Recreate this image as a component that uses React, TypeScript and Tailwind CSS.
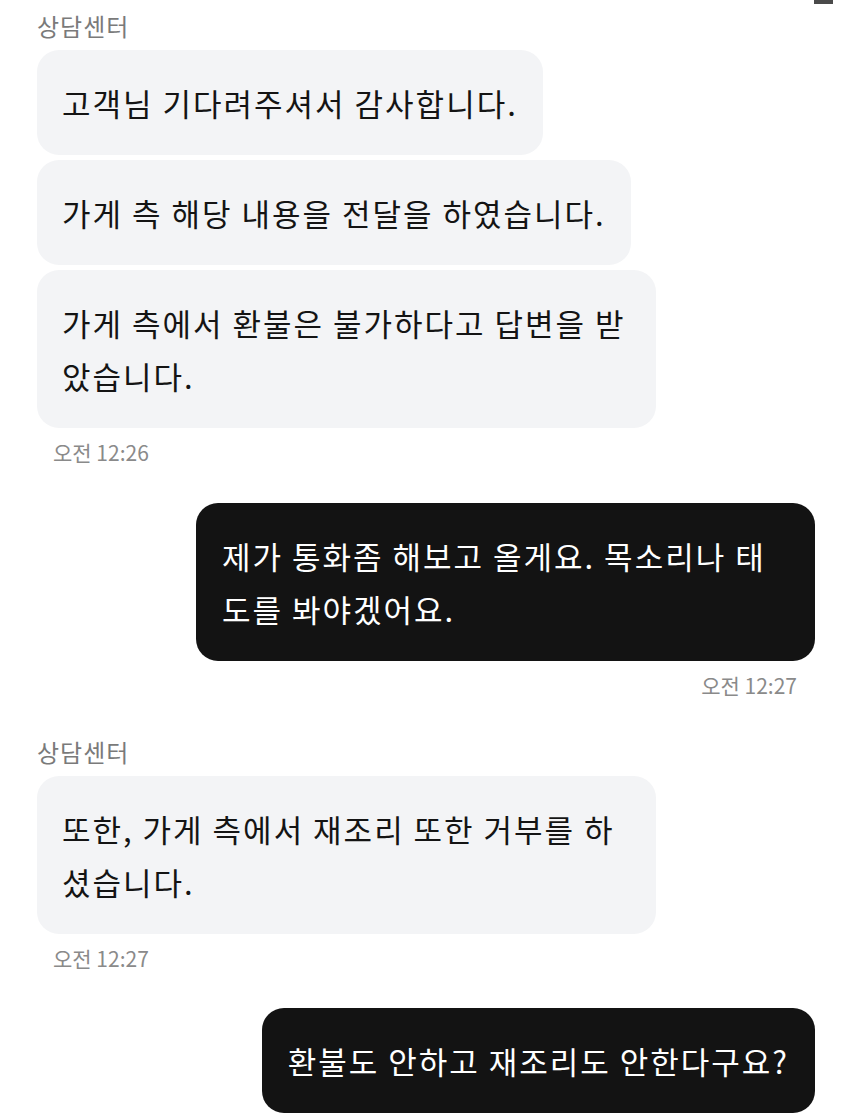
import React from "react";

const font = { fontFamily: '"Noto Sans CJK KR", "Noto Sans", sans-serif' };

function Label({ children }: { children: React.ReactNode }) {
  return <div className="text-[24px] leading-[30px] tracking-[1px] text-[#7a7a7a]">{children}</div>;
}

function LeftBubble({ children }: { children: React.ReactNode }) {
  return (
    <div className="self-start max-w-[619px] rounded-[22px] bg-[#f3f4f6] px-[25px] py-[26px] text-[31px] leading-[53px] tracking-[2px] text-[#141414]">
      {children}
    </div>
  );
}

function RightBubble({ children }: { children: React.ReactNode }) {
  return (
    <div className="self-end max-w-[619px] rounded-[22px] bg-[#131313] px-[26px] py-[26px] text-[31px] leading-[53px] tracking-[2px] text-white">
      {children}
    </div>
  );
}

function Time({ right, children }: { right?: boolean; children: React.ReactNode }) {
  return (
    <div
      className={
        "mt-[12px] text-[21px] leading-[24px] text-[#8a8a8a] " +
        (right ? "self-end pr-[18px]" : "self-start pl-[16px]")
      }
    >
      {children}
    </div>
  );
}

export default function App() {
  return (
    <div className="relative h-[1117px] w-[850px] overflow-hidden bg-white" style={font}>
      <div className="absolute right-[17px] top-0 h-[4px] w-[19px] bg-[#4a4a4a]" />
      <div className="flex flex-col pl-[37px] pr-[35px] pt-[11px]">
        <Label>상담센터</Label>
        <div className="mt-[9px] flex flex-col gap-[5px]">
          <LeftBubble>고객님 기다려주셔서 감사합니다.</LeftBubble>
          <LeftBubble>가게 측 해당 내용을 전달을 하였습니다.</LeftBubble>
          <LeftBubble>가게 측에서 환불은 불가하다고 답변을 받았습니다.</LeftBubble>
        </div>
        <Time>오전 12:26</Time>

        <div className="mt-[39px] flex flex-col">
          <RightBubble>제가 통화좀 해보고 올게요. 목소리나 태도를 봐야겠어요.</RightBubble>
          <Time right>오전 12:27</Time>
        </div>

        <div className="mt-[40px]">
          <Label>상담센터</Label>
        </div>
        <div className="mt-[9px] flex flex-col">
          <LeftBubble>또한, 가게 측에서 재조리 또한 거부를 하셨습니다.</LeftBubble>
          <Time>오전 12:27</Time>
        </div>

        <div className="mt-[38px] flex flex-col">
          <RightBubble>환불도 안하고 재조리도 안한다구요?</RightBubble>
        </div>
      </div>
    </div>
  );
}
